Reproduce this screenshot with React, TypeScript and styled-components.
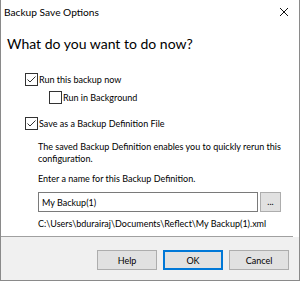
import * as React from "react";
import styled, { createGlobalStyle } from "styled-components";

const GlobalStyle = createGlobalStyle`
  html, body {
    margin: 0;
    padding: 0;
    background: #ffffff;
  }
  body {
    font-family: "Lato", "Liberation Sans", sans-serif;
    color: #000;
  }
`;

const Window = styled.div`
  box-sizing: border-box;
  width: 300px;
  height: 281px;
  border: 1px solid #8a8a8a;
  border-top: 0;
  background: #fff;
  display: flex;
  flex-direction: column;
`;

const TitleBar = styled.div`
  height: 24px;
  display: flex;
  align-items: center;
  justify-content: space-between;
  padding: 0 10px 0 3px;
  font-size: 10.2px;
`;

const CloseButton = styled.div`
  width: 10px;
  height: 10px;
  display: flex;
`;

const Body = styled.div`
  height: 213px;
  padding: 0 0 0 6px;
  display: flex;
  flex-direction: column;
`;

const Heading = styled.h1`
  margin: 10px 0 0;
  font-size: 14px;
  font-weight: 400;
  line-height: 20px;
`;

const CheckRow = styled.label<{ $indent?: number; $top: number }>`
  display: flex;
  align-items: center;
  height: 14px;
  gap: 1px;
  margin-top: ${(p) => p.$top}px;
  margin-left: ${(p) => 18 + (p.$indent || 0)}px;
  font-size: 9px;
`;

const Box = styled.span`
  box-sizing: border-box;
  width: 13px;
  height: 13px;
  border: 1px solid #333;
  background: #fff;
  display: flex;
`;

const Section = styled.div`
  margin-left: 31px;
  display: flex;
  flex-direction: column;
  font-size: 9px;
`;

const Para = styled.p<{ $top: number }>`
  margin: ${(p) => p.$top}px 0 0;
  line-height: 12px;
  white-space: nowrap;
`;

const InputRow = styled.div`
  display: flex;
  gap: 2px;
  margin-top: 7px;
  height: 20px;
`;

const NameInput = styled.div`
  box-sizing: border-box;
  width: 220px;
  border: 1px solid #7a7a7a;
  padding-left: 3px;
  display: flex;
  align-items: center;
`;

const BrowseButton = styled.div`
  box-sizing: border-box;
  width: 21px;
  border: 1px solid #adadad;
  background: #e1e1e1;
  display: flex;
  align-items: center;
  justify-content: center;
  padding-bottom: 2px;
`;

const Separator = styled.div`
  height: 1px;
  background: #a0a0a0;
  margin: auto 6px 0 -6px;
`;

const Footer = styled.div`
  height: 43px;
  background: #f0f0f0;
  display: flex;
  justify-content: flex-end;
  align-items: flex-start;
  gap: 6px;
  padding: 13px 10px 0 0;
  box-sizing: border-box;
`;

const Button = styled.div<{ $default?: boolean }>`
  box-sizing: border-box;
  width: 60px;
  height: 20px;
  background: #e1e1e1;
  border: ${(p) => (p.$default ? "2px solid #0078d7" : "1px solid #adadad")};
  font-size: 9px;
  display: flex;
  align-items: center;
  justify-content: center;
`;

const Check = ({ checked }: { checked: boolean }) => (
  <Box>
    {checked && (
      <svg width="11" height="11" viewBox="0 0 11 11">
        <polyline points="1.5,5.5 4,8 9.5,2.5" fill="none" stroke="#333" strokeWidth="1" />
      </svg>
    )}
  </Box>
);

export default function App() {
  return (
    <>
      <GlobalStyle />
      <Window>
        <TitleBar>
          <span>Backup Save Options</span>
          <CloseButton>
            <svg width="10" height="10" viewBox="0 0 10 10">
              <path d="M1 1L9 9M9 1L1 9" stroke="#111" strokeWidth="1" />
            </svg>
          </CloseButton>
        </TitleBar>
        <Body>
          <Heading>What do you want to do now?</Heading>
          <CheckRow $top={18}>
            <Check checked />
            Run this backup now
          </CheckRow>
          <CheckRow $top={4} $indent={24}>
            <Check checked={false} />
            Run in Background
          </CheckRow>
          <CheckRow $top={12}>
            <Check checked />
            Save as a Backup Definition File
          </CheckRow>
          <Section>
            <Para $top={11}>
              The saved Backup Definition enables you to quickly rerun this
              <br />
              configuration.
            </Para>
            <Para $top={8}>Enter a name for this Backup Definition.</Para>
            <InputRow>
              <NameInput>My Backup(1)</NameInput>
              <BrowseButton>...</BrowseButton>
            </InputRow>
            <Para $top={6}>C:\Users\bdurairaj\Documents\Reflect\My Backup(1).xml</Para>
          </Section>
          <Separator />
        </Body>
        <Footer>
          <Button>Help</Button>
          <Button $default>OK</Button>
          <Button>Cancel</Button>
        </Footer>
      </Window>
    </>
  );
}
